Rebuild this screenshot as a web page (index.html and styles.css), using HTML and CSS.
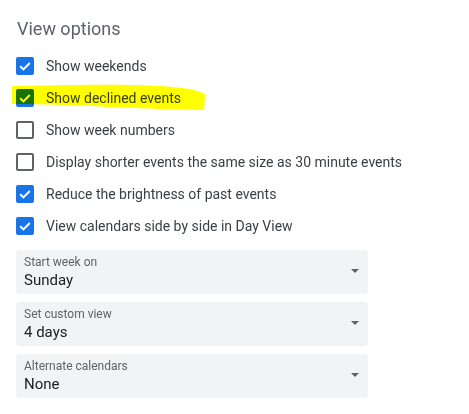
FILE: index.html
```html
<!DOCTYPE html>
<html lang="en">
<head>
<meta charset="utf-8">
<title>View options</title>
<link rel="stylesheet" href="styles.css">
</head>
<body>
<div class="panel">
  <h2 class="title">View options</h2>
  <ul class="options">
    <li class="option"><span class="box checked"><svg viewBox="0 0 18 18"><polyline points="4.2,9.3 7.4,12.4 13.8,6" /></svg></span><span class="label">Show weekends</span></li>
    <li class="option"><span class="box checked"><svg viewBox="0 0 18 18"><polyline points="4.2,9.3 7.4,12.4 13.8,6" /></svg></span><span class="label">Show declined events</span></li>
    <li class="option"><span class="box"></span><span class="label">Show week numbers</span></li>
    <li class="option"><span class="box"></span><span class="label">Display shorter events the same size as 30 minute events</span></li>
    <li class="option"><span class="box checked"><svg viewBox="0 0 18 18"><polyline points="4.2,9.3 7.4,12.4 13.8,6" /></svg></span><span class="label">Reduce the brightness of past events</span></li>
    <li class="option"><span class="box checked"><svg viewBox="0 0 18 18"><polyline points="4.2,9.3 7.4,12.4 13.8,6" /></svg></span><span class="label">View calendars side by side in Day View</span></li>
  </ul>
  <div class="selects">
    <div class="select"><div class="text"><div class="sel-label">Start week on</div><div class="sel-value">Sunday</div></div><span class="arrow"></span></div>
    <div class="select"><div class="text"><div class="sel-label">Set custom view</div><div class="sel-value">4 days</div></div><span class="arrow"></span></div>
    <div class="select"><div class="text"><div class="sel-label">Alternate calendars</div><div class="sel-value">None</div></div><span class="arrow"></span></div>
  </div>
  <svg class="highlight" viewBox="0 0 469 414" width="469" height="414">
    <path d="M12 86 C 40 85.5, 100 84, 135 85 C 170 86, 195 88, 205 94 L 204 110 C 175 109.5, 145 108.5, 120 107.5 C 80 105.5, 40 104, 12 104 Z" />
  </svg>
</div>
</body>
</html>
```
FILE: styles.css
```css
html, body {
  margin: 0;
  padding: 0;
  background: #ffffff;
}
.panel {
  position: relative;
  width: 469px;
  height: 414px;
  box-sizing: border-box;
  padding: 17px 0 0 16px;
  font-family: Roboto, "Liberation Sans", Arial, sans-serif;
  overflow: hidden;
}
.title {
  margin: 0 0 9px 1px;
  font-size: 18px;
  line-height: 24px;
  font-weight: 400;
  color: #5f6368;
}
.options {
  list-style: none;
  margin: 0;
  padding: 0;
}
.option {
  display: flex;
  align-items: center;
  gap: 12px;
  height: 32px;
  font-size: 14px;
  color: #3c4043;
}
.box {
  width: 18px;
  height: 18px;
  box-sizing: border-box;
  border: 2px solid #5f6368;
  border-radius: 2px;
  flex: none;
  display: flex;
  align-items: center;
  justify-content: center;
}
.box.checked {
  background: #1a73e8;
  border: none;
}
.box svg {
  width: 18px;
  height: 18px;
  fill: none;
  stroke: #ffffff;
  stroke-width: 2;
}
.label {
  line-height: 32px;
  white-space: nowrap;
}
.selects {
  display: flex;
  flex-direction: column;
  gap: 8px;
  margin-top: 8px;
  width: 352px;
}
.select {
  display: flex;
  align-items: center;
  justify-content: space-between;
  height: 44px;
  box-sizing: border-box;
  padding: 0 9px 0 8px;
  background: #f1f3f4;
  border-radius: 4px;
}
.text {
  padding-top: 5px;
  align-self: flex-start;
}
.sel-label {
  font-size: 12px;
  line-height: 15px;
  color: #5f6368;
}
.sel-value {
  font-size: 15px;
  line-height: 20px;
  color: #202124;
}
.arrow {
  width: 0;
  height: 0;
  border-left: 4px solid transparent;
  border-right: 4px solid transparent;
  border-top: 4px solid #5f6368;
  margin-bottom: 2px;
}
.highlight {
  position: absolute;
  left: 0;
  top: 0;
  pointer-events: none;
  mix-blend-mode: multiply;
}
.highlight path {
  fill: #ffff00;
}
```
